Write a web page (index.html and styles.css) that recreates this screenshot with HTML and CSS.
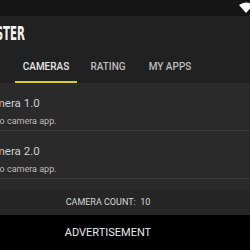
FILE: index.html
```html
<!DOCTYPE html>
<html lang="en">
<head>
<meta charset="utf-8">
<title>Camera Tester</title>
<link rel="stylesheet" href="styles.css">
</head>
<body>
  <div class="status">
    <svg class="wifi" width="14" height="11" viewBox="0 0 14 11">
      <path d="M0 3 Q7 -2 14 3 L7 11 Z" fill="#fff"/>
    </svg>
  </div>

  <div class="appbar">
    <div class="title"><span>CAMERA TESTER</span></div>
    <div class="tabs">
      <div class="tab active">CAMERAS</div>
      <div class="tab">RATING</div>
      <div class="tab">MY APPS</div>
    </div>
  </div>

  <div class="list">
    <div class="item">
      <div class="name">Camera 1.0</div>
      <div class="desc">Demo camera app.</div>
    </div>
    <div class="item">
      <div class="name">Camera 2.0</div>
      <div class="desc">Demo camera app.</div>
    </div>
    <div class="item">
      <div class="name">Camera 3.0</div>
      <div class="desc">Demo camera app.</div>
    </div>
  </div>

  <div class="count">CAMERA COUNT:&nbsp; 10</div>
  <div class="ad">ADVERTISEMENT</div>
</body>
</html>
```

FILE: styles.css
```css
* {
  box-sizing: border-box;
}

html, body {
  margin: 0;
  width: 250px;
  height: 250px;
  overflow: hidden;
  background: #000;
  font-family: Roboto, "Liberation Sans", sans-serif;
}

.status {
  height: 16px;
  background: #151515;
  position: relative;
}

.wifi {
  position: absolute;
  left: 239px;
  top: 2px;
}

.appbar {
  height: 67px;
  background: #212121;
  display: flex;
  flex-direction: column;
}

/* title is wider than the screen, only its tail shows */
.title {
  width: 25px;
  height: 16px;
  margin-top: 9px;
  display: flex;
  justify-content: flex-end;
  white-space: nowrap;
}

.title span {
  font-family: "DejaVu Sans Condensed", "DejaVu Sans", sans-serif;
  font-weight: bold;
  font-size: 19px;
  line-height: 16px;
  color: #f2f2f2;
  transform: scaleX(0.6);
  transform-origin: right center;
}

.tabs {
  display: flex;
  padding-left: 15px;
  margin-top: 16px;
}

.tab {
  width: 62px;
  height: 26px;
  padding-top: 4px;
  text-align: center;
  font-size: 10px;
  font-weight: 500;
  color: #bdbdbd;
  border-bottom: 2px solid transparent;
}

.tab.active {
  color: #e6e6e6;
  border-bottom-color: #d9cf1a;
}

.list {
  height: 107px;
  background: #2a2a2a;
  overflow: hidden;
}

.item {
  height: 48px;
  padding-top: 13px;
  border-bottom: 1px solid #3b3b3b;
  white-space: nowrap;
}

.name {
  margin-left: -19px;
  font-size: 11.5px;
  line-height: 15px;
  color: #d0d0d0;
}

.desc {
  margin-left: -19px;
  margin-top: 4px;
  font-size: 9px;
  line-height: 12px;
  color: #bcbcbc;
}

.count {
  height: 25px;
  width: 216px;
  background: #262626;
  box-shadow: 34px 0 0 #262626;
  text-align: center;
  font-size: 9px;
  line-height: 25px;
  color: #d6d6d6;
}

.ad {
  height: 35px;
  width: 216px;
  text-align: center;
  font-size: 11px;
  line-height: 36px;
  color: #e8e8e8;
}
```
